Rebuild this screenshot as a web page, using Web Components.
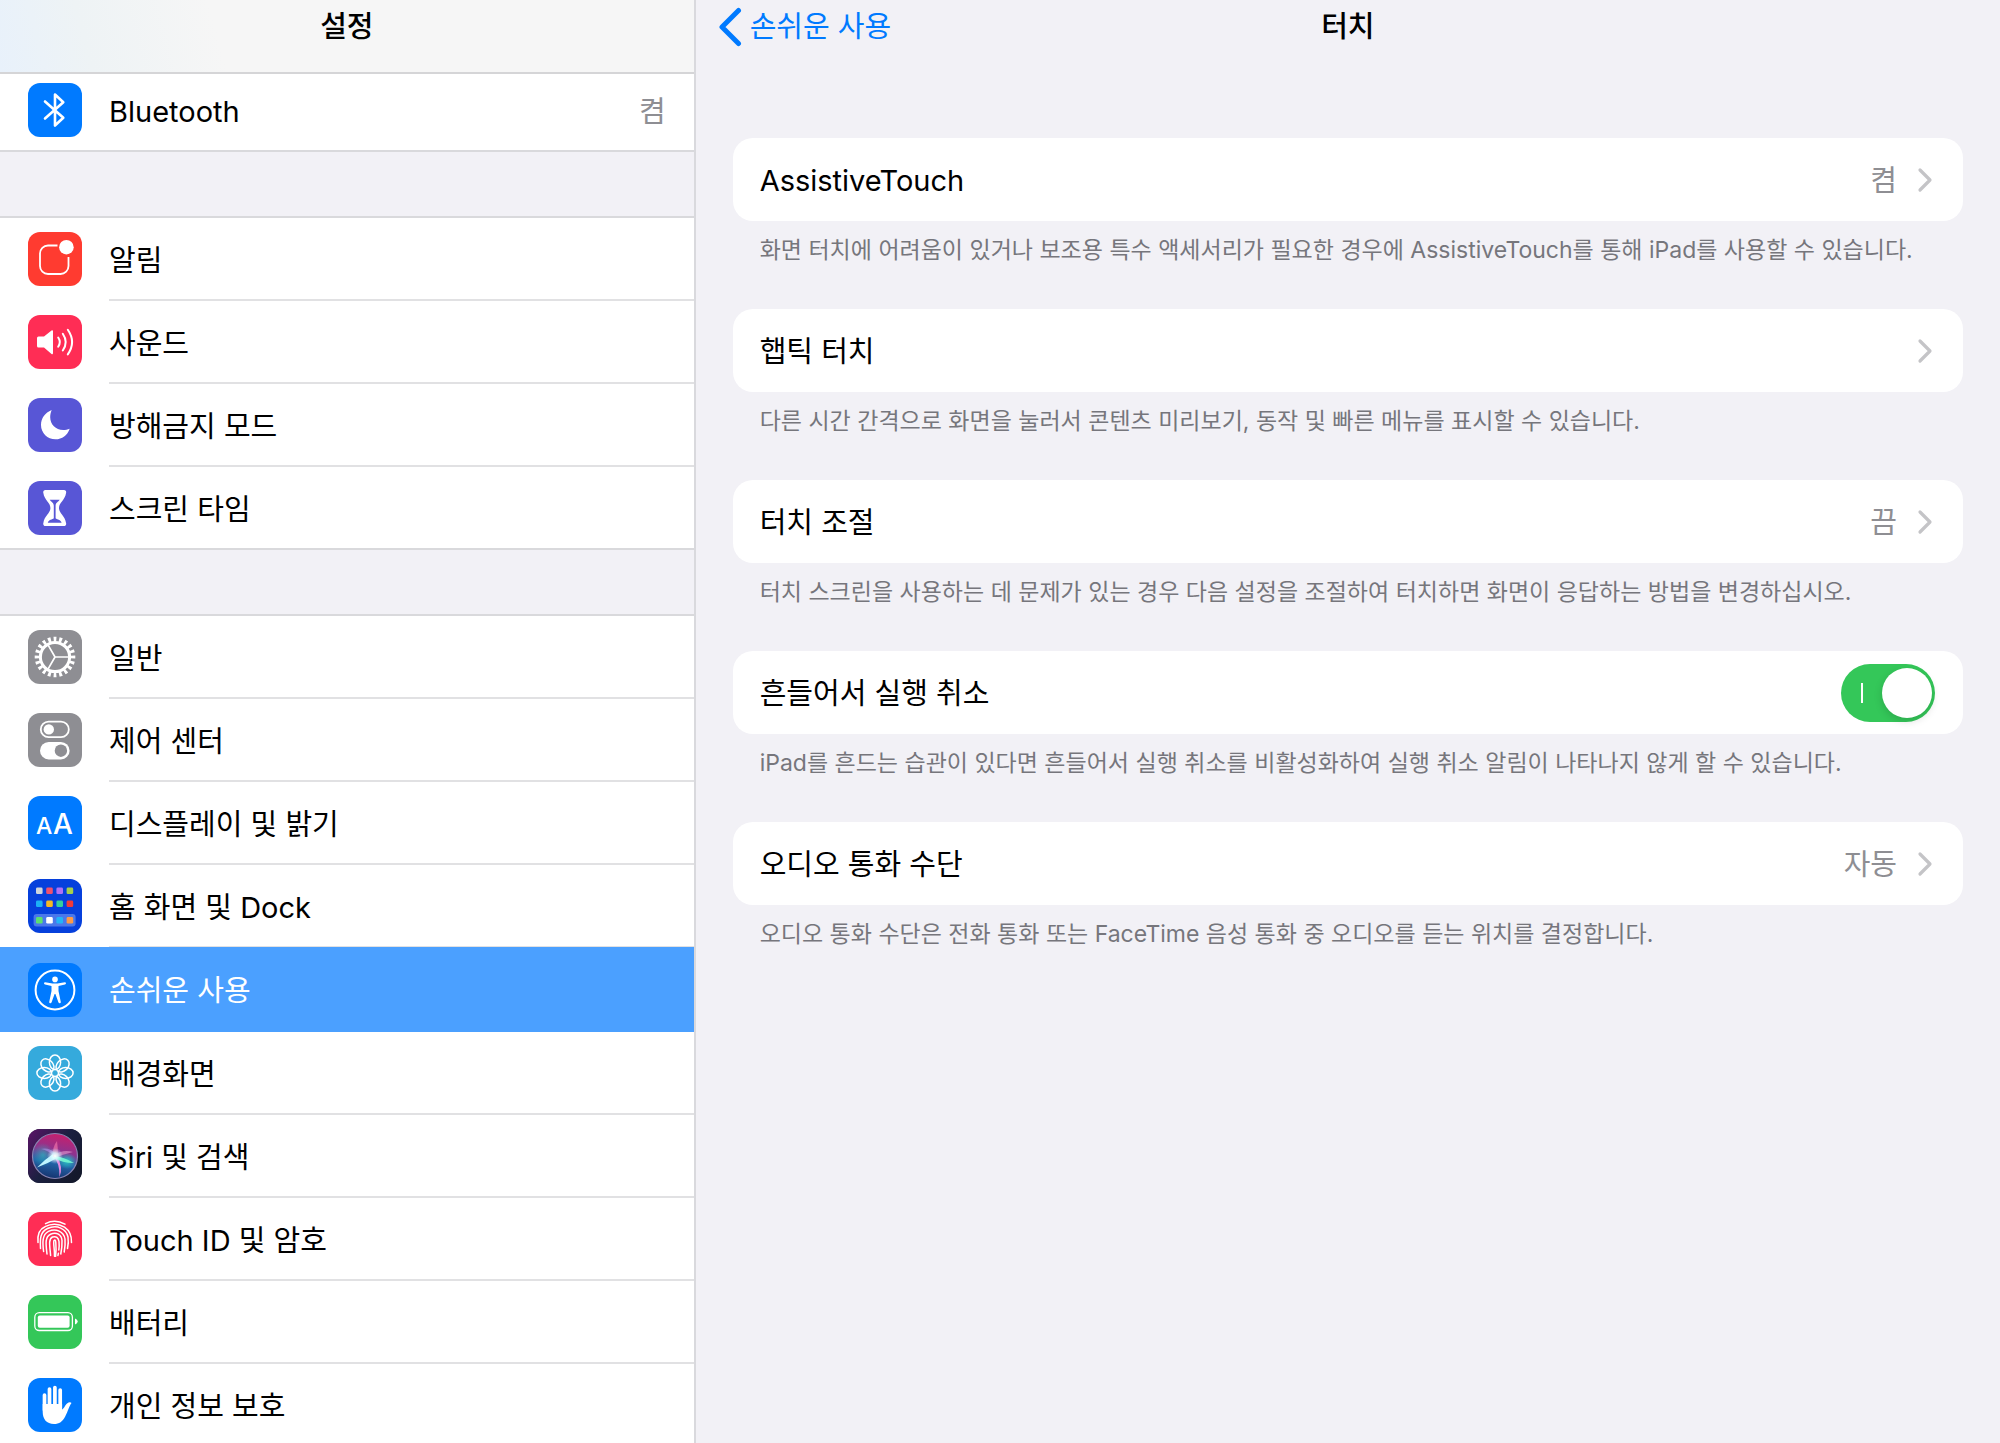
<!DOCTYPE html>
<html lang="ko">
<head>
<meta charset="utf-8">
<meta name="viewport" content="width=device-width, initial-scale=1">
<title>설정</title>
<style>
    body {
        margin: 0;
        height: 100vh;
        overflow: hidden;
        font-family: Inter, "Noto Sans CJK KR", sans-serif;
        font-size: 29px;
        line-height: 40px;
        color: #000;
        background: #f2f1f6;
    }
</style>
</head>
<body>
<settings-app>
    <settings-sidebar slot="sidebar" heading="설정">
        <nav-group scrolled>
            <nav-row icon="bluetooth" value="켬" last>Bluetooth</nav-row>
        </nav-group>
        <nav-group>
            <nav-row icon="notifications">알림</nav-row>
            <nav-row icon="sound">사운드</nav-row>
            <nav-row icon="moon">방해금지 모드</nav-row>
            <nav-row icon="hourglass" last>스크린 타임</nav-row>
        </nav-group>
        <nav-group>
            <nav-row icon="gear">일반</nav-row>
            <nav-row icon="control">제어 센터</nav-row>
            <nav-row icon="display">디스플레이 및 밝기</nav-row>
            <nav-row icon="home">홈 화면 및 Dock</nav-row>
            <nav-row icon="accessibility" selected>손쉬운 사용</nav-row>
            <nav-row icon="wallpaper">배경화면</nav-row>
            <nav-row icon="siri">Siri 및 검색</nav-row>
            <nav-row icon="touchid">Touch ID 및 암호</nav-row>
            <nav-row icon="battery">배터리</nav-row>
            <nav-row icon="privacy" last>개인 정보 보호</nav-row>
        </nav-group>
    </settings-sidebar>
    <settings-detail slot="detail" heading="터치" back="손쉬운 사용">
        <setting-card label="AssistiveTouch" value="켬">화면 터치에 어려움이 있거나 보조용 특수 액세서리가 필요한 경우에 AssistiveTouch를 통해 iPad를 사용할 수 있습니다.</setting-card>
        <setting-card label="햅틱 터치">다른 시간 간격으로 화면을 눌러서 콘텐츠 미리보기, 동작 및 빠른 메뉴를 표시할 수 있습니다.</setting-card>
        <setting-card label="터치 조절" value="끔">터치 스크린을 사용하는 데 문제가 있는 경우 다음 설정을 조절하여 터치하면 화면이 응답하는 방법을 변경하십시오.</setting-card>
        <setting-card label="흔들어서 실행 취소" toggle>iPad를 흔드는 습관이 있다면 흔들어서 실행 취소를 비활성화하여 실행 취소 알림이 나타나지 않게 할 수 있습니다.</setting-card>
        <setting-card label="오디오 통화 수단" value="자동">오디오 통화 수단은 전화 통화 또는 FaceTime 음성 통화 중 오디오를 듣는 위치를 결정합니다.</setting-card>
    </settings-detail>
</settings-app>

<script>
    // Icons: background colour and the drawing, on a 54x54 grid
    const homeColors = [
        ['#cfd5dc', '#f0506e', '#b070f5', '#a5d04c'],
        ['#1cb0f6', '#f5b921', '#34cf9c', '#f03a3a'],
        ['#5be070', '#ffffff', '#22b4f8', '#ff9a45']
    ];
    const homeDots = homeColors.map((row, r) => row.map((color, c) =>
        `<rect x="${8 + c * 10.2}" y="${[8.5, 21.5, 38][r]}" width="6.6" height="6.6" rx="1.4" fill="${color}"/>`
    ).join('')).join('');
    const petals = [0, 45, 90, 135, 180, 225, 270, 315].map(a =>
        `<ellipse cx="27" cy="16.3" rx="5.6" ry="7.4" transform="rotate(${a} 27 27)"/>`
    ).join('');

    const icons = {
        bluetooth: ['#007aff', `<path d="M17 18.5 35.3 34.8 27 42.5V11.5l8.3 7.7L17 35.5" fill="none" stroke="#fff" stroke-width="2.6" stroke-linejoin="round" stroke-linecap="round"/>`],
        notifications: ['#ff3b30', `<path d="M29.5 13.5H20a8 8 0 0 0-8 8V34a8 8 0 0 0 8 8h12.5a8 8 0 0 0 8-8v-9" fill="none" stroke="#fff" stroke-width="1.8"/><circle cx="38.4" cy="15.2" r="7.3" fill="#fff"/>`],
        sound: ['#ff2d55', `<path d="M10.5 21.5H16l7.5-6q1.5-.7 1.5 1v21.5q0 1.7-1.5 1L16 32.5h-5.5q-1.5 0-1.5-1.5v-8q0-1.5 1.5-1.5z" fill="#fff"/>
            <path d="M30.2 22.5q3.2 4.6 0 9.2M34.8 18.7q5.8 8.4 0 16.8M39.8 14.8q8.6 12.3 0 24.6" fill="none" stroke="#fff" stroke-width="2" stroke-linecap="round"/>`],
        moon: ['#5856d6', `<path d="M23.7 12C17 14.7 13 20.5 13 27c0 8 6.5 14.3 14.5 14.3 6.5 0 12-4 14.2-10.6-2 .9-4.3 1.3-6.5 1.3-7.5 0-13-5.5-13-12.7 0-2.8.5-5.2 1.500-7.300z" fill="#fff"/>`],
        hourglass: ['#5856d6', `<path d="M17.5 9h18.4a2.2 2.2 0 0 1 2.2 2.8C37 19.5 31 21.5 31 27s6 7.5 7.1 15.2a2.2 2.2 0 0 1-2.2 2.8H17.5a2.2 2.2 0 0 1-2.2-2.8C16.4 34.5 22.4 32.5 22.4 27s-6-7.5-7.1-15.2A2.2 2.2 0 0 1 17.5 9z" fill="#fff"/>
            <path d="M21.7 18.8h10c-1.5 2.3-4.1 2.7-4.1 6v12.5c1.2 1.3 5.4 1.4 6 4.4H19.8c.6-3 4.8-3.1 6-4.4V24.8c0-3.3-2.6-3.7-4.1-6z" fill="#5856d6"/>`],
        gear: ['#8e8e93', `<g fill="none" stroke="#fff"><circle cx="27" cy="27" r="14.6" stroke-width="3"/>
            <circle cx="27" cy="27" r="17.8" stroke-width="5" pathLength="40" stroke-dasharray="1 1" stroke-dashoffset=".5"/>
            <path d="M27 27h14M27 27l-7-12.1M27 27l-7 12.1" stroke-width="1.7"/></g>`],
        control: ['#8e8e93', `<rect x="12.8" y="8.6" width="28" height="15.6" rx="7.8" fill="none" stroke="#fff" stroke-width="1.8"/><circle cx="20.8" cy="16.4" r="5.2" fill="#fff"/>
            <rect x="12" y="29" width="29.6" height="17.4" rx="8.7" fill="#fff"/><circle cx="32.9" cy="37.7" r="6.2" fill="#8e8e93"/>`],
        display: ['#007aff', `<g fill="#fff" font-family="Inter, sans-serif" font-weight="500"><text x="8" y="38" font-size="23">A</text><text x="25" y="38" font-size="28">A</text></g>`],
        home: ['#0640dc', `<rect x="5.6" y="35" width="42" height="12.6" rx="3" fill="#4a78ea"/>${homeDots}`],
        accessibility: ['#007aff', `<circle cx="27" cy="27" r="19.4" fill="none" stroke="#fff" stroke-width="2"/><circle cx="27" cy="16.4" r="2.8" fill="#fff"/>
            <path d="M17.2 19.2l7.3 1.2h5l7.3-1.2q1.2 0 1.2 1t-1 1.3L30.5 23v5l2.3 11q0 1.2-1 1.3t-1.4-1L27.4 31h-.8l-3 8.3q-.4 1.1-1.4 1t-1-1.3l2.3-11v-5L17 21.5q-1-.3-1-1.3t1.2-1z" fill="#fff"/>`],
        wallpaper: ['#35aadc', `<g fill="none" stroke="#fff" stroke-width="1.5">${petals}</g>`],
        siri: ['#171a33', `<defs>
                <linearGradient id="bg" x1="0" y1="0" x2="1" y2=".7"><stop offset="0" stop-color="#5c1468"/><stop offset=".55" stop-color="#1b2040"/><stop offset="1" stop-color="#14192c"/></linearGradient>
                <linearGradient id="orb" x1=".6" y1="0" x2=".4" y2="1"><stop offset="0" stop-color="#c81f6c"/><stop offset=".4" stop-color="#8b3490"/><stop offset=".65" stop-color="#2464a8"/><stop offset="1" stop-color="#15336e"/></linearGradient>
                <radialGradient id="teal"><stop offset="0" stop-color="#23c7c4"/><stop offset="1" stop-color="#23c7c4" stop-opacity="0"/></radialGradient>
                <radialGradient id="glow"><stop offset="0" stop-color="#fff"/><stop offset=".4" stop-color="#dff" stop-opacity=".8"/><stop offset="1" stop-color="#bdf" stop-opacity="0"/></radialGradient>
            </defs>
            <rect width="54" height="54" fill="url(#bg)"/>
            <circle cx="27" cy="27" r="22.5" fill="url(#orb)" stroke="#8a86b4" stroke-width="1.2"/>
            <ellipse cx="15" cy="26" rx="11" ry="12" fill="url(#teal)" opacity=".6"/>
            <ellipse cx="39" cy="32" rx="10" ry="8" fill="url(#teal)"/>
            <path d="M25 25Q16 31 9 38.5 19 35 29 29z" fill="#bff6ff"/>
            <path d="M25 27q7 7 6.500 21 4-10-2.500-21z" fill="#e58ae0"/>
            <path d="M26 26q9-6 19-3-9 2-18 6z" fill="#d58cc4" opacity=".7"/>
            <path d="M26 27q10 1 20 7-12 0-20-5z" fill="#6ff0cf"/>
            <path d="M25 28q-1-10 4-16 1 7 1 15z" fill="#ee6fa8" opacity=".7"/>
            <path d="M27 27q-8-6-14-7 8-2 15 5z" fill="#a58ce0" opacity=".7"/>
            <circle cx="27" cy="27" r="8" fill="url(#glow)"/>`],
        touchid: ['#ff2d55', `<g fill="none" stroke="#fff" stroke-width="1.5" stroke-linecap="round">
            <path d="M17.5 11.7Q27 6.8 37 12.2"/>
            <path d="M10 30.5C9.3 23 11.5 17 17 14.7Q27 9.5 36.5 15.2C42 19 43.8 24 43.5 30.5"/>
            <path d="M12.5 36.5C12 27 12 20 19.5 16.5 29 12 38.5 17 40 25q.8 5.5-.5 11.5"/>
            <path d="M15.6 39.5C14.5 31 14 22.5 20.5 19.4 28 16 35.8 19.5 37 27q.5 6-.8 13"/>
            <path d="M19 42C18 33 16.5 25 22.5 22.2 28.5 19.8 33.5 22.5 34 28.5q.2 7-1.2 13.5"/>
            <path d="M22.6 43.5C22 35 20 27 24.5 25q5.5-1.7 6.5 4.5.4 4-.2 8.5M30.4 41.3l-.5 2.2"/>
            <path d="M26.5 44.3C26.7 37 25 31 26 28.5q1.6-1.3 1.8 2 .6 7-.2 13.8"/></g>`],
        battery: ['#34c759', `<rect x="6.8" y="17.7" width="37.6" height="17.8" rx="4.5" fill="none" stroke="#fff" stroke-width="1.3"/><rect x="9.8" y="20.4" width="31.8" height="12.4" rx="2" fill="#fff"/><path d="M47 23.6q2.7.8 2.7 3t-2.7 3z" fill="#fff"/>`],
        privacy: ['#007aff', `<g stroke="#fff" stroke-width="3.7" stroke-linecap="round"><path d="M16.5 17v15M21.5 11v20M26.9 9.5v20M32.2 12v20"/></g>
            <path d="M14.7 26h19.4v5.5c2.4-1.2 3.2-5.5 6.4-7q2-.8 3 .5c-2.4 3-3.5 8.5-6.3 13.5-2.5 5-6 7.5-11.2 7.5-7.5 0-11.3-5-11.3-12z" fill="#fff"/>`]
    };

    class SettingsIcon extends HTMLElement {
        constructor() {
            super();
            this.attachShadow({ mode: 'open' });
        }

        connectedCallback() {
            const [color, drawing] = icons[this.getAttribute('name')];
            this.shadowRoot.innerHTML = `
                <style>
                    :host {
                        display: block;
                        flex: none;
                        width: 54px;
                        height: 54px;
                        border-radius: 12px;
                        overflow: hidden;
                        background: ${color};
                    }
                    svg { display: block; }
                </style>
                <svg viewBox="0 0 54 54" width="54" height="54" aria-hidden="true">${drawing}</svg>
            `;
        }
    }

    class NavRow extends HTMLElement {
        constructor() {
            super();
            this.attachShadow({ mode: 'open' });
        }

        connectedCallback() {
            const value = this.getAttribute('value');
            this.shadowRoot.innerHTML = `
                <style>
                    :host {
                        display: block;
                        height: 83px;
                        background: #fff;
                    }
                    a {
                        display: flex;
                        height: 100%;
                        padding-left: 28px;
                        gap: 27px;
                        align-items: stretch;
                        box-sizing: border-box;
                        color: inherit;
                        text-decoration: none;
                    }
                    settings-icon { margin-top: 14px; }
                    .content {
                        flex: 1;
                        display: flex;
                        align-items: center;
                        justify-content: space-between;
                        padding: 4px 28px 0 0;
                        border-bottom: 2px solid #e1e1e3;
                    }
                    .value { color: #8e8e93; }
                    :host([last]) a { border-bottom: 2px solid #d9d9dc; }
                    :host([last]) .content { border-bottom: 0; }
                    /* the highlight covers the line above it */
                    :host([selected]) {
                        position: relative;
                        height: 85px;
                        margin-top: -1px;
                        background: #4ba0ff;
                        color: #fff;
                    }
                    :host([selected]) settings-icon { margin-top: 16px; }
                    :host([selected]) .content { border-color: transparent; }
                </style>
                <a href="#" ${this.hasAttribute('selected') ? 'aria-current="page"' : ''}>
                    <settings-icon name="${this.getAttribute('icon')}"></settings-icon>
                    <div class="content">
                        <span><slot></slot></span>
                        ${value ? `<span class="value">${value}</span>` : ''}
                    </div>
                </a>
            `;
        }
    }

    class NavGroup extends HTMLElement {
        constructor() {
            super();
            this.attachShadow({ mode: 'open' });
            this.shadowRoot.innerHTML = `
                <style>
                    :host {
                        display: block;
                        border-top: 2px solid #d9d9dc;
                        margin-bottom: 64px;
                    }
                    /* slid partly under the title bar */
                    :host([scrolled]) { margin-top: -7px; }
                </style>
                <slot></slot>
            `;
        }
    }

    class SettingsSidebar extends HTMLElement {
        constructor() {
            super();
            this.attachShadow({ mode: 'open' });
        }

        connectedCallback() {
            this.shadowRoot.innerHTML = `
                <style>
                    :host {
                        display: block;
                        overflow: hidden;
                        border-right: 2px solid #d9d9dd;
                    }
                    header {
                        position: relative;
                        z-index: 1;
                        height: 74px;
                        box-sizing: border-box;
                        padding-top: 7px;
                        border-bottom: 2px solid #d5d5d7;
                        background: linear-gradient(75deg, #e8f1fb, #eef3f5 90px, #f6f6f6 220px);
                    }
                    h1 {
                        margin: 0;
                        font-size: 29px;
                        line-height: 40px;
                        font-weight: 500;
                        text-align: center;
                    }
                </style>
                <header><h1>${this.getAttribute('heading')}</h1></header>
                <nav><slot></slot></nav>
            `;
        }
    }

    class ToggleSwitch extends HTMLElement {
        constructor() {
            super();
            this.attachShadow({ mode: 'open' });
        }

        connectedCallback() {
            this.shadowRoot.innerHTML = `
                <style>
                    :host { display: block; }
                    input {
                        appearance: none;
                        display: flex;
                        align-items: center;
                        justify-content: space-between;
                        width: 94px;
                        height: 58px;
                        margin: 0;
                        padding: 0 3px 0 20px;
                        box-sizing: border-box;
                        border-radius: 29px;
                        background: #34c759;
                    }
                    input::before {
                        content: "";
                        width: 2px;
                        height: 20px;
                        background: #fff;
                    }
                    input::after {
                        content: "";
                        width: 50px;
                        height: 50px;
                        border-radius: 50%;
                        background: #fff;
                        box-shadow: 0 3px 8px rgba(0, 0, 0, .15);
                    }
                    input:not(:checked) {
                        flex-direction: row-reverse;
                        padding: 0 20px 0 3px;
                        background: #e9e9eb;
                    }
                </style>
                <input type="checkbox" role="switch" checked aria-label="${this.getAttribute('label')}">
            `;
        }
    }

    class SettingCard extends HTMLElement {
        constructor() {
            super();
            this.attachShadow({ mode: 'open' });
        }

        getRow() {
            const label = this.getAttribute('label');
            if (this.hasAttribute('toggle')) {
                return `
                    <div class="row">
                        <span class="label">${label}</span>
                        <toggle-switch label="${label}"></toggle-switch>
                    </div>
                `;
            }
            return `
                <a class="row" href="#">
                    <span class="label">${label}</span>
                    <span class="value">${this.getAttribute('value') || ''}</span>
                    <svg width="18" height="26" viewBox="0 0 18 26" aria-hidden="true">
                        <path d="M3 3 13 13 3 23" fill="none" stroke="#c4c4c7" stroke-width="3.2" stroke-linecap="round" stroke-linejoin="round"/>
                    </svg>
                </a>
            `;
        }

        connectedCallback() {
            this.shadowRoot.innerHTML = `
                <style>
                    :host { display: block; }
                    .row {
                        display: flex;
                        align-items: center;
                        height: 83px;
                        padding: 0 28px 0 27px;
                        box-sizing: border-box;
                        border-radius: 20px;
                        background: #fff;
                        color: inherit;
                        text-decoration: none;
                    }
                    .label, .value { padding-top: 3px; }
                    .label { flex: 1; }
                    .value {
                        margin-right: 20px;
                        color: #8e8e93;
                    }
                    p {
                        margin: 0;
                        padding: 13px 27px 43px;
                        font-size: 23px;
                        line-height: 32px;
                        color: #76767c;
                    }
                </style>
                ${this.getRow()}
                <p><slot></slot></p>
            `;
        }
    }

    class SettingsDetail extends HTMLElement {
        constructor() {
            super();
            this.attachShadow({ mode: 'open' });
        }

        connectedCallback() {
            this.shadowRoot.innerHTML = `
                <style>
                    :host { display: block; }
                    header {
                        display: grid;
                        grid-template-columns: 1fr auto 1fr;
                        height: 138px;
                        padding: 7px 22px 0;
                        box-sizing: border-box;
                        align-items: start;
                    }
                    a {
                        display: flex;
                        align-items: center;
                        gap: 8px;
                        color: #007aff;
                        text-decoration: none;
                    }
                    h2 {
                        margin: 0;
                        font-size: 29px;
                        line-height: 40px;
                        font-weight: 500;
                    }
                    main { padding: 0 37px; }
                </style>
                <header>
                    <a href="#">
                        <svg width="24" height="40" viewBox="0 0 24 40" aria-hidden="true">
                            <path d="M20.500 3.500 4 20l16.500 16.500" fill="none" stroke="#007aff" stroke-width="5" stroke-linecap="round" stroke-linejoin="round"/>
                        </svg>
                        ${this.getAttribute('back')}
                    </a>
                    <h2>${this.getAttribute('heading')}</h2>
                </header>
                <main><slot></slot></main>
            `;
        }
    }

    class SettingsApp extends HTMLElement {
        constructor() {
            super();
            this.attachShadow({ mode: 'open' });
            this.shadowRoot.innerHTML = `
                <style>
                    :host {
                        display: grid;
                        grid-template-columns: 32fr 60fr;
                        height: 100%;
                    }
                </style>
                <slot name="sidebar"></slot>
                <slot name="detail"></slot>
            `;
        }
    }

    customElements.define('settings-icon', SettingsIcon);
    customElements.define('toggle-switch', ToggleSwitch);
    customElements.define('nav-row', NavRow);
    customElements.define('nav-group', NavGroup);
    customElements.define('setting-card', SettingCard);
    customElements.define('settings-sidebar', SettingsSidebar);
    customElements.define('settings-detail', SettingsDetail);
    customElements.define('settings-app', SettingsApp);
</script>
</body>
</html>
